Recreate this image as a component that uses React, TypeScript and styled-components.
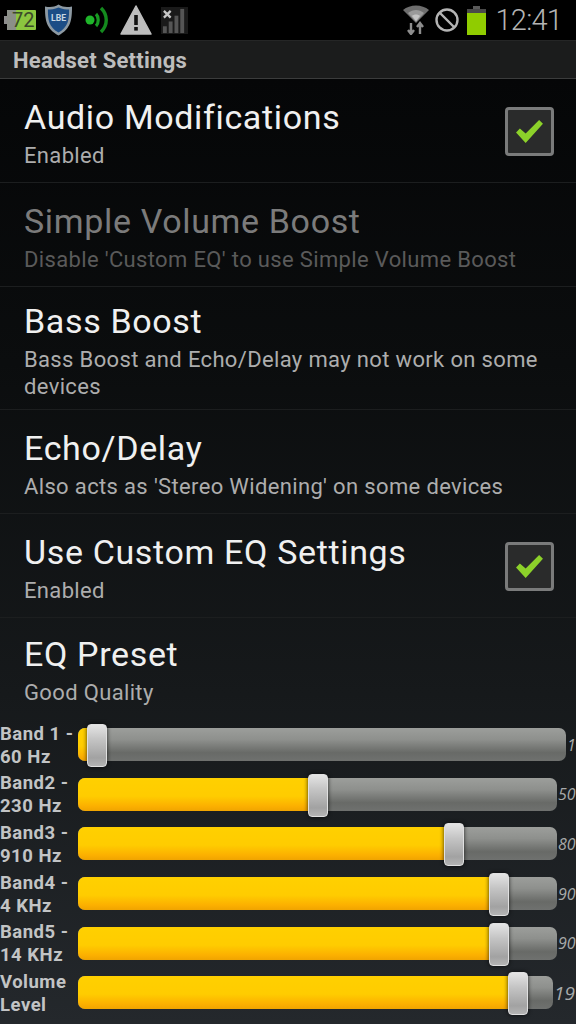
import styled, { createGlobalStyle } from "styled-components";

const GlobalStyle = createGlobalStyle`
  html, body {
    margin: 0;
    padding: 0;
    background: #000;
  }
  body {
    font-family: Roboto, "Liberation Sans", sans-serif;
  }
`;

const SPhone = styled.div`
  width: 576px;
  height: 1024px;
  overflow: hidden;
  display: flex;
  flex-direction: column;
  background: #000;
`;
const SStatusBar = styled.div`
  height: 40px;
  flex: none;
  display: flex;
  align-items: center;
  justify-content: space-between;
  background: #000;
`;
const SStatusGroup = styled.div`
  display: flex;
  align-items: center;
`;
const SClock = styled.span`
  font-size: 29px;
  font-weight: 300;
  letter-spacing: -0.8px;
  color: #b4b4b4;
  margin: 0 14px 0 10px;
`;
const STitleBar = styled.div`
  box-sizing: border-box;
  height: 39px;
  flex: none;
  display: flex;
  align-items: center;
  padding: 1px 0 0 13px;
  background: #1b1c1c;
  border-top: 1px solid #252626;
  border-bottom: 1px solid #3b3c3c;
  font-size: 22px;
  font-weight: 700;
  letter-spacing: 0.25px;
  color: #bdbdbd;
`;
const SContent = styled.div`
  flex: 1;
  background: linear-gradient(#050607 0%, #0b0d0e 30%, #16191b 65%, #24282c 100%);
`;
const SRow = styled.div<{ $last?: boolean }>`
  box-sizing: border-box;
  min-height: ${({ $last }) => ($last ? "102px" : "104px")};
  padding: ${({ $last }) => ($last ? "12.5px 22px 10.5px 24px" : "13.5px 22px 9.5px 24px")};
  display: flex;
  align-items: center;
  justify-content: space-between;
  border-bottom: ${({ $last }) => ($last ? "none" : "1px solid #1c1e1f")};
`;
const SRowText = styled.div`
  flex: 1;
`;
const SRowTitle = styled.div<{ $disabled?: boolean }>`
  font-size: 34px;
  line-height: 40px;
  letter-spacing: 0.65px;
  margin-bottom: 5px;
  color: ${({ $disabled }) => ($disabled ? "#7b7b7b" : "#f0f0f0")};
`;
const SRowSub = styled.div<{ $disabled?: boolean }>`
  font-size: 22px;
  line-height: 27px;
  letter-spacing: 0.35px;
  color: ${({ $disabled }) => ($disabled ? "#5a5a5a" : "#adadad")};
`;
const SCheckbox = styled.div`
  box-sizing: border-box;
  width: 49px;
  height: 49px;
  flex: none;
  margin-top: -3px;
  display: flex;
  align-items: center;
  justify-content: center;
  background: #2a2b2b;
  border: 3px solid #7a7b7b;
  border-radius: 4px;
`;
const SBands = styled.div`
  display: flex;
  flex-direction: column;
`;
const SBandRow = styled.div`
  height: 49.6px;
  display: flex;
  align-items: center;
`;
const SBandLabel = styled.div`
  box-sizing: border-box;
  width: 78px;
  flex: none;
  padding-top: 2px;
  font-size: 18.5px;
  line-height: 23px;
  font-weight: 700;
  letter-spacing: 0.5px;
  color: #c2c4c5;
  white-space: nowrap;
`;
const STrack = styled.div`
  position: relative;
  flex: 1;
  height: 33px;
  border-radius: 7px;
  background: linear-gradient(#9c9e9b 0%, #8e908d 35%, #686a67 75%, #6f716f 100%);
`;
const SFill = styled.div`
  position: absolute;
  left: 0;
  top: 0;
  bottom: 0;
  border-radius: 7px 0 0 7px;
  background: linear-gradient(#ffd000 0%, #ffcc00 55%, #fcb000 85%, #f0a400 100%);
`;
const SThumb = styled.div`
  position: absolute;
  top: -4px;
  width: 20px;
  height: 43px;
  margin-left: -9.5px;
  box-sizing: border-box;
  border-radius: 4px;
  border: 1px solid #e0e0e0;
  background: linear-gradient(#e4e4e4 0%, #c4c4c4 35%, #a2a2a2 80%, #b4b4b4 100%);
  box-shadow: 0 0 4px rgba(0, 0, 0, 0.75);
`;
const SBandValue = styled.div<{ $width: number; $big?: boolean }>`
  width: ${({ $width }) => $width}px;
  flex: none;
  padding-left: 1px;
  box-sizing: border-box;
  font-family: "Open Sans", Roboto, sans-serif;
  font-size: ${({ $big }) => ($big ? "19px" : "16px")};
  font-style: italic;
  color: #a8aaaa;
  white-space: nowrap;
`;

type Band = {
  label: string;
  sub: string;
  value: number;
  max: number;
  width: number;
  big?: boolean;
};

const BANDS: Band[] = [
  { label: "Band 1 -", sub: "60 Hz", value: 1, max: 100, width: 10 },
  { label: "Band2 -", sub: "230 Hz", value: 50, max: 100, width: 19 },
  { label: "Band3 -", sub: "910 Hz", value: 80, max: 100, width: 19 },
  { label: "Band4 -", sub: "4 KHz", value: 90, max: 100, width: 19 },
  { label: "Band5 -", sub: "14 KHz", value: 90, max: 100, width: 19 },
  { label: "Volume", sub: "Level", value: 19, max: 20, width: 23, big: true },
];

const Check = () => (
  <svg width="29" height="25" viewBox="0 0 30 26">
    <path d="M1 14 L5 10 L11 15 L25 1 L29 5 L11 25 Z" fill="#8cd12a" />
  </svg>
);

const BatteryLevel = () => (
  <svg width="32" height="22" viewBox="0 0 32 22" style={{ marginLeft: 4 }}>
    <rect x="0" y="7" width="3" height="8" fill="#8d8d8d" />
    <rect x="3" y="1" width="11" height="20" fill="#8b8f88" />
    <rect x="12" y="1" width="20" height="20" rx="1" fill="#8bc63f" />
    <text x="8" y="18" fontSize="20" fontFamily="Roboto" fill="#3b4a2a">72</text>
  </svg>
);

const Shield = () => (
  <svg width="27" height="32" viewBox="0 0 28 32" style={{ marginLeft: 9 }}>
    <path d="M14 0 C19 3 23 3 28 2 C28 16 27 25 14 32 C1 25 0 16 0 2 C5 3 9 3 14 0 Z" fill="#8e9aa3" />
    <path d="M14 3 C18 5 22 5 25 5 C25 16 24 23 14 29 C4 23 3 16 3 5 C6 5 10 5 14 3 Z" fill="#1c4d86" />
    <text x="14" y="17" fontSize="9" fontWeight="700" textAnchor="middle" fontFamily="Roboto" fill="#c9d6e2">LBE</text>
  </svg>
);

const Speaker = () => (
  <svg width="24" height="28" viewBox="0 0 24 28" style={{ marginLeft: 13 }}>
    <circle cx="5" cy="14" r="4.5" fill="#1fb52a" />
    <path d="M11 8 C14 11 14 17 11 20" fill="none" stroke="#179a22" strokeWidth="3.2" />
    <path d="M16 2 C23 9 23 19 16 26" fill="none" stroke="#148a1e" strokeWidth="3.4" />
  </svg>
);

const Warning = () => (
  <svg width="32" height="30" viewBox="0 0 32 30" style={{ marginLeft: 11 }}>
    <path d="M16 1 L31 29 L1 29 Z" fill="#bdbdbd" stroke="#bdbdbd" strokeWidth="1.5" strokeLinejoin="round" />
    <rect x="14.2" y="10" width="3.6" height="10" fill="#111" />
    <rect x="14.2" y="22" width="3.6" height="3.6" fill="#111" />
  </svg>
);

const NoSignal = () => (
  <svg width="27" height="27" viewBox="0 0 28 28" style={{ marginLeft: 9 }}>
    <rect x="0" y="0" width="28" height="28" fill="#1a1a1a" />
    <rect x="2" y="20" width="4" height="7" fill="#555" />
    <rect x="8" y="15" width="4" height="12" fill="#555" />
    <rect x="14" y="9" width="4" height="18" fill="#555" />
    <rect x="20" y="2" width="4" height="25" fill="#555" />
    <path d="M3 4 L10 11 M10 4 L3 11" stroke="#c8c8c8" strokeWidth="2.4" />
  </svg>
);

const Wifi = () => (
  <svg width="26" height="30" viewBox="0 0 26 30">
    <path d="M0 5 C7 -1 19 -1 26 5 L13 18 Z" fill="#6e6e6e" />
    <path d="M5 8 C10 4 16 4 21 8 L13 17 Z" fill="#9a9a9a" />
    <path d="M9 11 C11 9 15 9 17 11 L13 16 Z" fill="#c4c4c4" />
    <path d="M8 18 V29 M5 25 L8 29 L11 25" fill="none" stroke="#8d8d8d" strokeWidth="2.4" />
    <path d="M17 29 V18 M14 22 L17 18 L20 22" fill="none" stroke="#8d8d8d" strokeWidth="2.4" />
  </svg>
);

const Blocked = () => (
  <svg width="24" height="24" viewBox="0 0 24 24" style={{ marginLeft: 6 }}>
    <circle cx="12" cy="12" r="10.5" fill="none" stroke="#b4b4b4" strokeWidth="2.4" />
    <path d="M5 5 L19 19" stroke="#b4b4b4" strokeWidth="2.4" />
  </svg>
);

const Battery = () => (
  <svg width="19" height="29" viewBox="0 0 19 29" style={{ marginLeft: 8 }}>
    <rect x="6" y="0" width="7" height="3" fill="#5a5a5a" />
    <rect x="0" y="3" width="19" height="4" fill="#4a4a4a" />
    <rect x="0" y="7" width="19" height="22" fill="#90cc00" />
  </svg>
);

export default function App() {
  return (
    <SPhone>
      <GlobalStyle />
      <SStatusBar>
        <SStatusGroup>
          <BatteryLevel />
          <Shield />
          <Speaker />
          <Warning />
          <NoSignal />
        </SStatusGroup>
        <SStatusGroup>
          <Wifi />
          <Blocked />
          <Battery />
          <SClock>12:41</SClock>
        </SStatusGroup>
      </SStatusBar>
      <STitleBar>Headset Settings</STitleBar>
      <SContent>
        <SRow>
          <SRowText>
            <SRowTitle>Audio Modifications</SRowTitle>
            <SRowSub>Enabled</SRowSub>
          </SRowText>
          <SCheckbox>
            <Check />
          </SCheckbox>
        </SRow>
        <SRow>
          <SRowText>
            <SRowTitle $disabled>Simple Volume Boost</SRowTitle>
            <SRowSub $disabled>Disable 'Custom EQ' to use Simple Volume Boost</SRowSub>
          </SRowText>
        </SRow>
        <SRow>
          <SRowText>
            <SRowTitle>Bass Boost</SRowTitle>
            <SRowSub>Bass Boost and Echo/Delay may not work on some devices</SRowSub>
          </SRowText>
        </SRow>
        <SRow>
          <SRowText>
            <SRowTitle>Echo/Delay</SRowTitle>
            <SRowSub>Also acts as 'Stereo Widening' on some devices</SRowSub>
          </SRowText>
        </SRow>
        <SRow>
          <SRowText>
            <SRowTitle>Use Custom EQ Settings</SRowTitle>
            <SRowSub>Enabled</SRowSub>
          </SRowText>
          <SCheckbox>
            <Check />
          </SCheckbox>
        </SRow>
        <SRow $last>
          <SRowText>
            <SRowTitle>EQ Preset</SRowTitle>
            <SRowSub>Good Quality</SRowSub>
          </SRowText>
        </SRow>
        <SBands>
          {BANDS.map(band => {
            const ratio = band.value / band.max;
            const pos = `calc(13.6px + ${ratio} * (100% - 27.2px))`;
            return (
              <SBandRow key={band.label + band.sub}>
                <SBandLabel>
                  {band.label}
                  <br />
                  {band.sub}
                </SBandLabel>
                <STrack>
                  <SFill style={{ width: pos }} />
                  <SThumb style={{ left: pos }} />
                </STrack>
                <SBandValue $width={band.width} $big={band.big}>
                  {band.value}
                </SBandValue>
              </SBandRow>
            );
          })}
        </SBands>
      </SContent>
    </SPhone>
  );
}
